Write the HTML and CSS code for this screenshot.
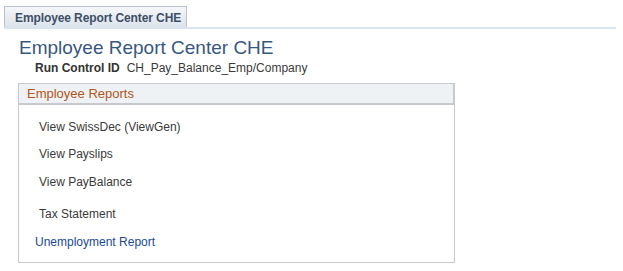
FILE: index.html
```html
<!DOCTYPE html>
<html>
<head>
<meta charset="utf-8">
<link rel="stylesheet" href="styles.css">
</head>
<body>
<div class="tabbar">
  <div class="tab">Employee Report Center CHE</div>
</div>
<h1 class="title">Employee Report Center CHE</h1>
<div class="runctl"><span class="lbl">Run Control ID</span><span class="val">CH_Pay_Balance_Emp/Company</span></div>
<div class="group">
  <div class="group-hd">Employee Reports</div>
  <ul class="items">
    <li class="it it1">View SwissDec (ViewGen)</li>
    <li class="it it2">View Payslips</li>
    <li class="it it3">View PayBalance</li>
    <li class="it it4">Tax Statement</li>
    <li class="it it5 link">Unemployment Report</li>
  </ul>
</div>
</body>
</html>
```
FILE: styles.css
```css
html, body { margin: 0; padding: 0; background: #fff; }
body { font-family: Arial, "Liberation Sans", sans-serif; color: #333; width: 623px; height: 271px; overflow: hidden; }
.tabbar { margin: 6px 7px 0 4px; border-bottom: 2px solid #d9e4f0; display: flex; height: 21px; }
.tab { width: 183px; height: 21px; box-sizing: border-box; border: 1px solid #b8c3cf; border-bottom: none;
  background: linear-gradient(#f4f6f9, #dde4ec); color: #3d4f66; font-weight: bold; font-size: 12px;
  display: flex; align-items: center; padding-left: 10px; padding-top: 1px; letter-spacing: -0.1px; }
.title { margin: 9px 0 0 19px; font-weight: normal; font-size: 19px; line-height: 19px; color: #38577f; }
.runctl { margin: 4px 0 0 35px; font-size: 12px; line-height: 14px; }
.lbl { font-weight: bold; color: #333; margin-right: 7px; }
.val { color: #3a3a3a; }
.group { margin: 8px 0 0 18px; width: 437px; height: 180px; box-sizing: border-box; border: 1px solid #c6cacf; border-top: none; }
.group-hd { height: 22px; box-sizing: border-box; border: 1px solid #c6cacf; border-right-width: 2px; border-bottom-width: 2px; margin: 0 -1px; background: #eef2f4;
  color: #b3561a; font-size: 13px; line-height: 19px; padding-left: 8px; }
.items { list-style: none; margin: 0; padding: 0; font-size: 12px; }
.it { padding-left: 20px; line-height: 14px; color: #3a3a3a; }
.it1 { margin-top: 15px; }
.it2 { margin-top: 13px; }
.it3 { margin-top: 14px; }
.it4 { margin-top: 18px; }
.it5 { margin-top: 14px; }
.link { color: #1a4a9a; padding-left: 16px; }
```
